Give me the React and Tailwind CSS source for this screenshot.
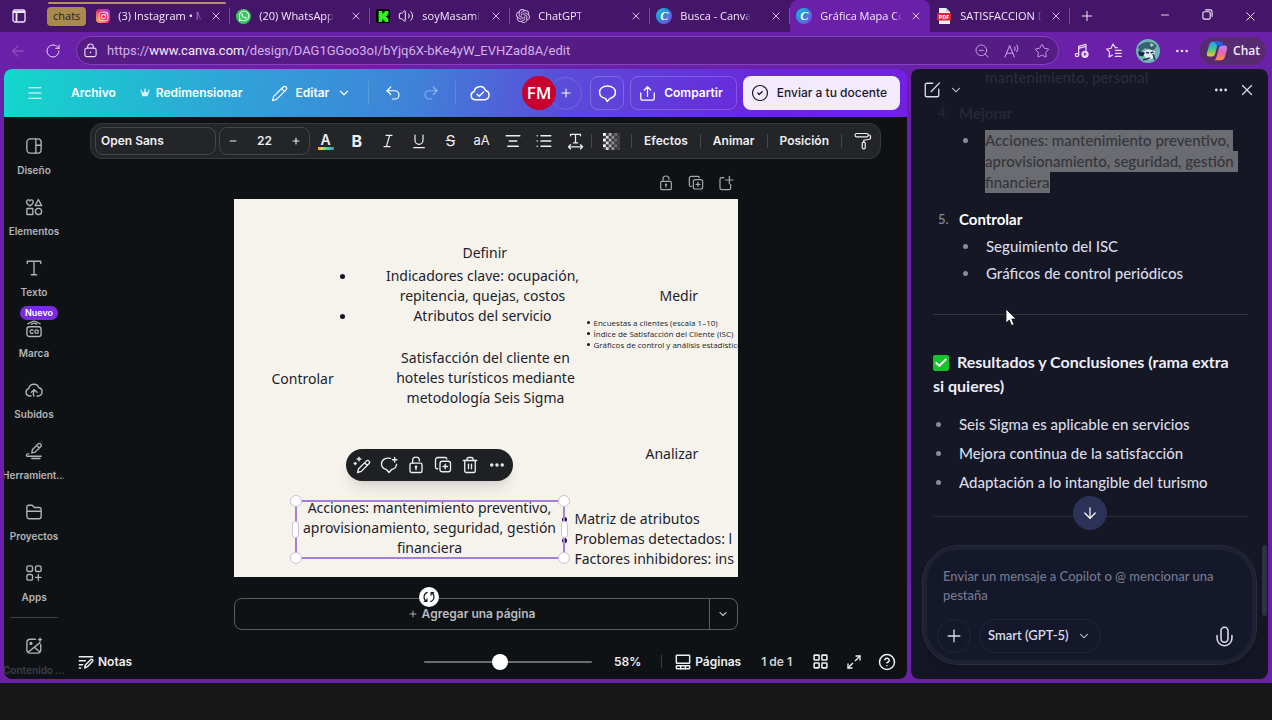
import { useState } from 'react';
import {
  AlignCenter, ArrowDown, ArrowLeft, Check, ChevronDown, CircleCheck, CircleHelp, CloudUpload,
  Ellipsis, Folder, LayoutGrid, List, Maximize2, Menu, MessageCircle, Minus, Pencil,
  Plus, Redo2, RotateCw, Star, Trash2, Undo2, Volume2, X, ZoomOut,
} from 'lucide-react';
import { FaInstagram, FaWhatsapp } from 'react-icons/fa';
import { SiKick, SiOpenai } from 'react-icons/si';

const stroke = {
  viewBox: '0 0 24 24',
  fill: 'none',
  stroke: 'currentColor',
  strokeWidth: 1.8,
  strokeLinecap: 'round',
  strokeLinejoin: 'round',
};

const UnlockIcon = ({ className }) => (
  <svg {...stroke} className={className}>
    <rect x="4" y="9.500" width="16" height="12.500" rx="2" />
    <path d="M7.500 9.500V6a4.500 4.500 0 0 1 9 0v.5M12 14v4" />
    <circle cx="12" cy="14.500" r=".8" />
  </svg>
);

const CopyPlusIcon = ({ className }) => (
  <svg {...stroke} className={className}>
    <rect x="8" y="7" width="14" height="14" rx="3" />
    <path d="M5 17H4a2 2 0 0 1-2-2V5a3 3 0 0 1 3-3h10a2 2 0 0 1 2 2M15 11v6M12 14h6" />
  </svg>
);

const AddPageIcon = ({ className }) => (
  <svg {...stroke} className={className}>
    <path d="M9 4H5.500A2.500 2.500 0 0 0 3 6.500v13A2.500 2.500 0 0 0 5.500 22h11a2.500 2.500 0 0 0 2.500-2.500V14M17 2v11M11.500 7.500h11" />
  </svg>
);

const DesignIcon = ({ className }) => (
  <svg {...stroke} className={className}>
    <rect x="2.500" y="2.500" width="19" height="19" rx="4.500" />
    <path d="M14.500 2.500v19M14.500 11h7" />
  </svg>
);

const ElementsIcon = ({ className }) => (
  <svg {...stroke} className={className}>
    <path d="M6.500 10.500C3.500 8.500 2 7 2 5.200 2 2.400 5.200 1.500 6.500 4c1.300-2.500 4.500-1.600 4.500 1.200 0 1.800-1.500 3.300-4.500 5.300zM17.800 2l4.400 8h-8.800z" />
    <rect x="2.500" y="14" width="8" height="8" rx=".5" />
    <circle cx="18" cy="18" r="4.200" />
  </svg>
);

const TextIcon = ({ className }) => (
  <svg {...stroke} className={className}>
    <path d="M3 6V3h18v3M12 3v18M8.500 21h7" />
  </svg>
);

const BrandIcon = ({ className }) => (
  <svg {...stroke} className={className}>
    <path d="M4 5c3-1 4.500-3.500 8-3.500S17 4 20 5M8.500 5.500c2-1.500 5-1.500 7 0" />
    <rect x="2.500" y="9" width="19" height="13" rx="3.500" />
    <path d="M10.800 13.600a2.400 2.400 0 1 0 0 3.800" />
    <circle cx="15.500" cy="15.500" r="2.300" />
  </svg>
);

const ToolsIcon = ({ className }) => (
  <svg {...stroke} className={className}>
    <path d="M9 14.500l1-4.500 7.500-7.500a2 2 0 0 1 3 0l.5.500a2 2 0 0 1 0 3L13.500 13.500zM15.500 4.500l3.500 3.500M5 15.500c-4 .5-4 3.500-1 3.500h17.500M9 22h11" />
  </svg>
);

const FolderIcon = ({ className }) => (
  <svg {...stroke} className={className}>
    <path d="M2.500 18V5.500A2.500 2.500 0 0 1 5 3h4.500l3 3H19a2.500 2.500 0 0 1 2.500 2.500V18a3 3 0 0 1-3 3h-13a3 3 0 0 1-3-3zM2.500 11h19" />
  </svg>
);

const UploadIcon = ({ className }) => (
  <svg {...stroke} className={className}>
    <path d="M8 20H6a5 5 0 0 1-1-9.800A7 7 0 0 1 18.500 9 5.600 5.600 0 0 1 18 20h-2M12 20c-1.500-2-1-4.500.5-7M8.500 15l4-3.500 3.500 3.500" />
  </svg>
);

const AppsIcon = ({ className }) => (
  <svg {...stroke} className={className}>
    <rect x="2.500" y="2.500" width="7.500" height="7.500" rx="2" />
    <rect x="14" y="2.500" width="7.500" height="7.500" rx="2" />
    <rect x="2.500" y="14" width="7.500" height="7.500" rx="2" />
    <path d="M17.800 14v7.500M14 17.800h7.500" />
  </svg>
);

const MagicMediaIcon = ({ className }) => (
  <svg {...stroke} className={className}>
    <path d="M14 3H7a4.500 4.500 0 0 0-4.500 4.500v9.500A4.500 4.500 0 0 0 7 21.500h9.500A4.500 4.500 0 0 0 21 17v-7M4.500 20L20 7.500M13 14l7 6" />
    <circle cx="8" cy="8.500" r="1.200" fill="currentColor" />
    <path d="M20 1.500v4M18 3.500h4" />
  </svg>
);

const NotesIcon = ({ className }) => (
  <svg {...stroke} strokeWidth={2.2} className={className}>
    <path d="M2 4h20M2 10h9M2 16h5M2 21h2M10 21l1-4.500L19 8.500a1.800 1.800 0 0 1 2.700 0 1.800 1.800 0 0 1 0 2.700L14 19z" />
  </svg>
);

const PagesIcon = ({ className }) => (
  <svg {...stroke} strokeWidth={2.2} className={className}>
    <rect x="2" y="2" width="20" height="12" rx="1" />
    <rect x="2" y="17.500" width="20" height="4.500" rx="1" />
    <path d="M8.500 17.500V22M15.500 17.500V22" />
  </svg>
);

const RollerIcon = ({ className }) => (
  <svg {...stroke} strokeWidth={1.6} className={className}>
    <rect x="1.500" y="2" width="17.500" height="4.500" rx="2" />
    <path d="M19 4h1.500a1.500 1.500 0 0 1 1.500 1.500V8c0 1-.5 1.500-1.500 1.700L13 11v3" />
    <rect x="11" y="13.500" width="4" height="9" rx="1.600" />
  </svg>
);

const SpacingIcon = ({ className }) => (
  <svg {...stroke} className={className}>
    <path d="M5 4V2h14v2M12 2v12M9 14h6M2 19.500h20M5 16.500l-3 3 3 3M19 16.500l3 3-3 3" />
  </svg>
);

const CheckerIcon = ({ className }) => (
  <svg viewBox="0 0 18 18" fill="#fff" className={className}>
    {[0, 1, 2, 3, 4, 5].map((row) =>
      [0, 1, 2, 3, 4, 5].map((col) => (
        <rect
          key={`${row}-${col}`}
          x={col * 3}
          y={row * 3}
          width="3"
          height="3"
          opacity={(row + col) % 2 === 0 ? 1 - col * 0.17 : 0.1}
        />
      ))
    )}
  </svg>
);

const MagicPencilIcon = ({ className }) => (
  <svg {...stroke} className={className}>
    <path d="M6 22l1.500-5L18 6.500a2 2 0 0 1 3 0l.5.500a2 2 0 0 1 0 3L11 20.500zM15.500 9l3.500 3.500" />
    <path d="M8 1.500v5M5.500 4h5M3 8.500v3M1.500 10h3" />
  </svg>
);

const CommentPlusIcon = ({ className }) => (
  <svg {...stroke} className={className}>
    <path d="M14 3.200C7.500 1.500 2 5 2 10.500c0 4 3 6.500 6.500 7.500L12 22l3.500-4c4-1 6.500-3.500 6.500-7M19.500 2v6M16.500 5h6" />
  </svg>
);

const CommentIcon = ({ className }) => (
  <svg {...stroke} className={className}>
    <path d="M12 2.500c6 0 10 3.500 10 8 0 4-2.500 6.500-6.500 7.500L11.500 22 9.500 18.200C5 17.500 2 14.800 2 10.500c0-4.500 4-8 10-8z" />
  </svg>
);

const CrownIcon = ({ className }) => (
  <svg viewBox="0 0 24 24" fill="currentColor" className={className}>
    <path d="M12 3l3.500 8L22 7l-3.500 13h-13L2 7l6.500 4z" />
    <circle cx="2.500" cy="6" r="2" />
    <circle cx="12" cy="3" r="2" />
    <circle cx="21.500" cy="6" r="2" />
  </svg>
);

const CloudCheckIcon = ({ className }) => (
  <svg {...stroke} className={className}>
    <path d="M6 20a5 5 0 0 1-1-9.800A7 7 0 0 1 18.500 9 5.600 5.600 0 0 1 18 20zM8.500 13.500l2.500 2.500 5-5" />
  </svg>
);

const ShareIcon = ({ className }) => (
  <svg {...stroke} className={className}>
    <path d="M2.500 11v8a2.500 2.500 0 0 0 2.500 2.500h14a2.500 2.500 0 0 0 2.500-2.500v-8M12 16V2.500M7.500 7L12 2.500 16.500 7" />
  </svg>
);

const ComposeIcon = ({ className }) => (
  <svg {...stroke} className={className}>
    <path d="M13 3H5a2 2 0 0 0-2 2v14a2 2 0 0 0 2 2h14a2 2 0 0 0 2-2v-8M11 14L22 2.500" />
  </svg>
);

const MicIcon = ({ className }) => (
  <svg {...stroke} className={className}>
    <rect x="8" y="1.500" width="8" height="17" rx="4" />
    <path d="M3.500 11v3a8.500 8.500 0 0 0 17 0v-3" />
  </svg>
);

const CopilotLogo = ({ className }) => (
  <svg viewBox="0 0 24 24" className={className}>
    <defs>
      <linearGradient id="cpA" x1="0" y1="0" x2="0" y2="1">
        <stop offset="0" stopColor="#2a9df4" />
        <stop offset=".5" stopColor="#3fc98b" />
        <stop offset="1" stopColor="#f6c81f" />
      </linearGradient>
      <linearGradient id="cpB" x1="0" y1="0" x2="0" y2="1">
        <stop offset="0" stopColor="#a78bfa" />
        <stop offset=".5" stopColor="#f062b0" />
        <stop offset="1" stopColor="#fb923c" />
      </linearGradient>
    </defs>
    <path d="M8 2h8c-2 0-3 1.500-3.500 3.500L10 15c-.6 2-1.800 3-4 3H3.500C1 18 .5 16 1.200 13.500L3.500 5.500C4.200 3.200 5.700 2 8 2z" fill="url(#cpA)" />
    <path d="M16 22H8c2 0 3-1.500 3.500-3.500L14 9c.6-2 1.800-3 4-3h2.500c2.500 0 3 2 2.300 4.500l-2.300 8c-.7 2.300-2.200 3.500-4.500 3.500z" fill="url(#cpB)" />
    <path d="M9 2h6.500c2 0 2.700 1 3.300 4H12z" fill="#2563eb" />
  </svg>
);

const CanvaLogo = () => (
  <span className="flex size-4 items-center justify-center rounded-full bg-gradient-to-br from-[#16c5d0] via-[#2b86e0] to-[#7b2be0] font-['Liberation_Serif',serif] text-xs font-bold text-white italic">
    C
  </span>
);

const PdfLogo = () => (
  <svg viewBox="0 0 16 16" className="size-4">
    <path d="M3 0h7l4 4v12H3z" fill="#f4f4f5" />
    <path d="M10 0l4 4h-4z" fill="#c9c9d2" />
    <rect x="1" y="5" width="14" height="7.500" rx="1" fill="#e0262d" />
    <text x="8" y="10.800" textAnchor="middle" fontSize="5.500" fontWeight="700" fill="#fff" fontFamily="Open Sans">PDF</text>
  </svg>
);

const tabs = [
  {
    title: '(3) Instagram • M',
    icon: (
      <span className="flex size-[14px] items-center justify-center rounded bg-gradient-to-tr from-[#fdb42c] via-[#e8286b] to-[#8a34d6]">
        <FaInstagram className="size-[11px] text-white" />
      </span>
    ),
  },
  {
    title: '(20) WhatsApp',
    icon: (
      <span className="flex size-[15px] items-center justify-center rounded-full bg-[#35c85a]">
        <FaWhatsapp className="size-3 text-white" />
      </span>
    ),
  },
  {
    title: 'soyMasami',
    audio: true,
    icon: (
      <span className="flex size-[14px] items-center justify-center rounded-xs bg-black">
        <SiKick className="size-[11px] text-[#2bf51b]" />
      </span>
    ),
  },
  { title: 'ChatGPT', icon: <SiOpenai className="size-[14px] text-[#d9c8ea]" /> },
  { title: 'Busca - Canva', icon: <CanvaLogo /> },
  { title: 'Gráfica Mapa Co', icon: <CanvaLogo />, active: true },
  { title: 'SATISFACCION D', icon: <PdfLogo /> },
];

const railItems = [
  { label: 'Diseño', Icon: DesignIcon },
  { label: 'Elementos', Icon: ElementsIcon },
  { label: 'Texto', Icon: TextIcon },
  { label: 'Marca', Icon: BrandIcon, badge: 'Nuevo' },
  { label: 'Subidos', Icon: UploadIcon },
  { label: 'Herramient…', Icon: ToolsIcon },
  { label: 'Proyectos', Icon: FolderIcon },
  { label: 'Apps', Icon: AppsIcon },
];

function BrowserTab({ tab }) {
  return (
    <div
      className={`flex h-full w-[140px] min-w-0 items-center ${
        tab.active ? 'rounded-t-lg bg-[#6b20a9]' : ''
      }`}
    >
      <button className="flex min-w-0 flex-1 items-center gap-2 pl-[6px] text-left text-[11px] text-[#f3e8fb]">
        <span className="shrink-0">{tab.icon}</span>
        {tab.audio && <Volume2 className="size-4 shrink-0" strokeWidth={1.5} />}
        <span className="overflow-hidden whitespace-nowrap mask-r-from-90%">{tab.title}</span>
      </button>
      <button aria-label="Cerrar pestaña" className="flex w-[27px] shrink-0 items-center justify-center text-[#e9d8f7]">
        <X className="size-3" strokeWidth={1.8} />
      </button>
      <span className={`h-4 w-px ${tab.active ? '' : 'bg-[#7d4ba6]'}`} />
    </div>
  );
}

function TabStrip() {
  return (
    <div className="relative flex h-8 shrink-0 items-center bg-[#451569]">
      <span className="absolute top-[2px] left-12 h-[2px] w-[178px] rounded-full bg-[#b58f6c]" />
      <button aria-label="Acciones de pestañas" className="flex w-[37px] justify-center text-[#f3e8fb]">
        <svg viewBox="0 0 14 14" className="size-[14px]" fill="none" stroke="currentColor" strokeWidth="1.300">
          <rect x="1" y="1" width="12" height="12" rx="2" />
          <path d="M1 3h12M4.500 4v9" strokeWidth="1.800" />
        </svg>
      </button>
      <button className="mr-1 ml-[10px] h-[19px] rounded bg-[#a98a4f] px-[6px] text-[11px] text-[#2c1d14]">chats</button>
      <div className="flex h-full min-w-0 flex-1 items-center">
        {tabs.map((tab) => (
          <BrowserTab key={tab.title} tab={tab} />
        ))}
        <button aria-label="Nueva pestaña" className="px-[9px] text-[#f3e8fb]">
          <Plus className="size-4" strokeWidth={1.5} />
        </button>
      </div>
      <div className="flex text-[#f3e8fb]">
        <button aria-label="Minimizar" className="flex w-[43px] justify-center"><Minus className="size-3" strokeWidth={1.8} /></button>
        <button aria-label="Restaurar" className="flex w-[43px] justify-center">
          <svg viewBox="0 0 12 12" className="size-[11px]" fill="none" stroke="currentColor" strokeWidth="1.200">
            <rect x="1" y="3" width="8" height="8" rx="1.500" />
            <path d="M3.500 1H9a2 2 0 0 1 2 2v5.500" />
          </svg>
        </button>
        <button aria-label="Cerrar" className="flex w-[43px] justify-center"><X className="size-[15px]" strokeWidth={1.5} /></button>
      </div>
    </div>
  );
}

function AddressBar() {
  return (
    <div className="flex h-[37px] shrink-0 items-center bg-[#6b20a9] pr-[6px] text-[#ead9f8]">
      <button aria-label="Atrás" className="flex w-9 justify-center text-[#9a5fcb]"><ArrowLeft className="size-[18px]" strokeWidth={1.4} /></button>
      <button aria-label="Actualizar" className="mr-[6px] flex w-[34px] justify-center"><RotateCw className="size-4" strokeWidth={1.5} /></button>
      <div className="flex h-[29px] min-w-0 flex-1 items-center rounded-full border border-[#8443b8] bg-[#561c86] pr-2 pl-[6px]">
        <svg {...stroke} viewBox="0 0 16 16" strokeWidth="1.200" className="size-[15px] shrink-0">
          <rect x="2" y="5.500" width="12" height="9" rx="2" />
          <path d="M5 5.500V4a3 3 0 0 1 6 0v1.500M8 9.500v1" />
        </svg>
        <p className="ml-[9px] min-w-0 flex-1 truncate font-[Roboto,sans-serif] text-[13px] text-[#d2b3ea]">
          https://<span className="text-[#f6ecfc]">www.canva.com</span>/design/DAG1GGoo3oI/bYjq6X-bKe4yW_EVHZad8A/edit
        </p>
        <div className="flex items-center gap-[14px] text-[#c49be6]">
          <button aria-label="Alejar"><ZoomOut className="size-4" strokeWidth={1.5} /></button>
          <button aria-label="Leer en voz alta">
            <svg {...stroke} strokeWidth={1.6} className="size-4">
              <path d="M1.500 21L8.500 4l7 17M4 15.500h9M16 6a5 5 0 0 1 0 5M19 3a9 9 0 0 1 0 10" />
            </svg>
          </button>
          <button aria-label="Favoritos"><Star className="size-4" strokeWidth={1.5} /></button>
        </div>
      </div>
      <button aria-label="Multimedia" className="ml-[15px]">
        <svg {...stroke} strokeWidth={2} className="size-4">
          <path d="M7 18V5l11-3v9M7 8l11-3" />
          <circle cx="4.500" cy="18" r="2.500" />
          <circle cx="16.500" cy="17" r="4.500" fill="currentColor" />
          <path d="M15.500 15.200v3.600l2.600-1.800z" stroke="#6b20a9" strokeWidth="1" fill="#6b20a9" />
        </svg>
      </button>
      <button aria-label="Lista de favoritos" className="ml-4">
        <svg {...stroke} strokeWidth={1.8} className="size-4">
          <path d="M17 7h-3L10.500 1.500 7.500 8 1 9l4.500 4.800L4.500 21l5-2.800M14 11h9M14 15.500h9M14 20h9" />
        </svg>
      </button>
      <button aria-label="Perfil" className="ml-[14px] overflow-hidden rounded-full">
        <svg viewBox="0 0 24 24" className="size-6">
          <rect width="24" height="24" fill="#6fb3b4" />
          <path d="M2 8c5-6 14-7 19-1l-4 5-8-3-5 4z" fill="#35626e" />
          <path d="M5 14l7-4 7 2-2 7-4 2-4-3z" fill="#e5ecf0" />
          <path d="M2 12l7 1.500-2 4-4-1z" fill="#1b2747" />
          <path d="M10 13.500l3 .5M14.500 14l3-1M7 21l7-2M17 15l2 6" stroke="#27345a" strokeWidth="1.500" />
          <path d="M14 4l4 2-3 2z" fill="#b6e3dc" />
        </svg>
      </button>
      <button aria-label="Más opciones" className="ml-[14px]"><Ellipsis className="size-4" strokeWidth={2} /></button>
      <button className="ml-[10px] flex h-7 items-center gap-[5px] rounded-full bg-[#582a72] px-[6px] text-xs font-semibold text-[#f6ecfc]">
        <CopilotLogo className="size-[22px]" />
        Chat
      </button>
    </div>
  );
}

function EditorHeader() {
  return (
    <header className="flex h-12 shrink-0 items-center bg-[linear-gradient(100deg,#12d8cb_0%,#2fa4d8_25%,#3f83d8_45%,#5a4cd9_62%,#6a25dc_85%,#7420e4_100%)] pr-[7px] pl-[22px] text-xs font-semibold text-white">
      <button aria-label="Menú" className="mr-[27px]"><Menu className="size-[18px]" strokeWidth={1.6} /></button>
      <button>Archivo</button>
      <button className="ml-6 flex items-center gap-[6px]">
        <CrownIcon className="size-[10px] text-[#d8f3ff]" />
        Redimensionar
      </button>
      <button className="ml-7 flex items-center gap-2">
        <Pencil className="size-[17px]" strokeWidth={1.6} />
        Editar
        <ChevronDown className="size-[14px]" strokeWidth={2} />
      </button>
      <span className="ml-[17px] h-6 w-px bg-white/15" />
      <button aria-label="Deshacer" className="ml-[15px]"><Undo2 className="size-[18px]" strokeWidth={1.6} /></button>
      <button aria-label="Rehacer" className="ml-5 text-white/40"><Redo2 className="size-[18px]" strokeWidth={1.6} /></button>
      <span className="ml-[15px] h-6 w-px bg-white/15" />
      <button aria-label="Cambios guardados" className="ml-[14px]"><CloudCheckIcon className="size-5" /></button>
      <div className="ml-auto flex items-center">
        <span className="z-10 flex size-[34px] items-center justify-center rounded-full bg-[#c8002f] font-['Open_Sans',sans-serif] text-[17px] font-semibold">FM</span>
        <button aria-label="Agregar miembro" className="-ml-[7px] flex size-[33px] items-center justify-center rounded-full border border-white/15">
          <Plus className="size-[14px]" strokeWidth={1.8} />
        </button>
        <button aria-label="Comentarios" className="ml-2 flex size-[34px] items-center justify-center rounded-lg border border-white/20">
          <CommentIcon className="size-[19px]" />
        </button>
        <button className="ml-[6px] flex h-[34px] items-center gap-2 rounded-lg border border-white/20 px-2 pr-[13px]">
          <ShareIcon className="size-[17px]" />
          Compartir
        </button>
        <button className="ml-[6px] flex h-[34px] items-center gap-2 rounded-lg bg-[#f3ebfd] px-2 pr-[13px] font-medium text-[#1c1528]">
          <CircleCheck className="size-[18px]" strokeWidth={1.6} />
          Enviar a tu docente
        </button>
      </div>
    </header>
  );
}

function Rail() {
  return (
    <nav className="w-[60px] shrink-0 overflow-hidden pt-5 text-[10px] font-semibold text-[#b3b4b8]">
      <div className="flex flex-col gap-5">
        {railItems.map(({ label, Icon, badge }) => (
          <button key={label} className="relative flex h-[41px] flex-col items-center gap-[7px] whitespace-nowrap">
            {badge && (
              <span className="absolute -top-[14px] left-4 rounded-full bg-[#7a2ae0] px-[5px] text-[9px] leading-[14px] text-white">
                {badge}
              </span>
            )}
            <Icon className="size-[18px]" />
            <span className="leading-4">{label}</span>
          </button>
        ))}
      </div>
      <hr className="mx-[6px] mt-3 border-[#3b3d42]" />
      <button className="mt-[19px] flex w-full flex-col items-center gap-[7px] whitespace-nowrap">
        <MagicMediaIcon className="size-[18px]" />
        <span className="leading-4 text-[#3d3f44]">Contenido …</span>
      </button>
    </nav>
  );
}

const Sep = () => <span className="h-[14px] w-px shrink-0 bg-[#47484c]" />;

function TextToolbar() {
  return (
    <div className="flex h-9 w-full max-w-[791px] items-center rounded-xl border border-[#38393d] bg-[#242528] px-1 text-xs font-semibold text-[#eeeff1]">
      <button className="h-7 w-[121px] rounded-lg border border-[#45464b] px-[5px] text-left">Open Sans</button>
      <div className="ml-[3px] flex h-7 w-[91px] items-center justify-between rounded-lg border border-[#45464b] px-2">
        <button aria-label="Reducir tamaño"><Minus className="size-[10px]" strokeWidth={2.6} /></button>
        <label className="sr-only" htmlFor="fontSize">Tamaño de fuente</label>
        <input id="fontSize" defaultValue="22" className="w-8 bg-transparent text-center outline-none" />
        <button aria-label="Aumentar tamaño"><Plus className="size-[10px]" strokeWidth={2.6} /></button>
      </div>
      <div className="flex flex-1 items-center justify-around">
        <button aria-label="Color de texto" className="flex w-[18px] flex-col items-center">
          <span className="text-sm leading-[14px]">A</span>
          <span className="h-[3px] w-4 bg-[linear-gradient(90deg,#f59e2b,#d8e23a,#46e06a,#35b9f0,#7a5cf0)]" />
        </button>
        <button aria-label="Negrita" className="w-[18px] text-base font-bold">B</button>
        <button aria-label="Cursiva" className="flex w-[18px] justify-center">
          <svg {...stroke} className="size-4"><path d="M9 3.500h9M6 20.500h9M14.500 3.500l-5 17" /></svg>
        </button>
        <button aria-label="Subrayado" className="flex w-[18px] justify-center">
          <svg {...stroke} className="size-4"><path d="M6 3v8a6 6 0 0 0 12 0V3M4 22h16" /></svg>
        </button>
        <button aria-label="Tachado" className="w-[18px] text-[15px] font-normal line-through">S</button>
        <button aria-label="Mayúsculas" className="w-[18px] text-[13px] font-normal">aA</button>
        <button aria-label="Alineación" className="flex w-[18px] justify-center"><AlignCenter className="size-[18px]" strokeWidth={2} /></button>
        <button aria-label="Lista" className="flex w-[18px] justify-center"><List className="size-[18px]" strokeWidth={2} /></button>
        <button aria-label="Espaciado" className="flex w-[18px] justify-center"><SpacingIcon className="size-[17px]" /></button>
      </div>
      <Sep />
      <button aria-label="Transparencia" className="px-[11px]"><CheckerIcon className="size-[17px]" /></button>
      <Sep />
      <button className="px-3">Efectos</button>
      <Sep />
      <button className="px-3">Animar</button>
      <Sep />
      <button className="px-3">Posición</button>
      <Sep />
      <button aria-label="Copiar estilo" className="pr-1 pl-3"><RollerIcon className="size-[18px]" /></button>
    </div>
  );
}

const Handle = ({ className }) => (
  <span className={`absolute rounded-full border border-[#c9c2d6] bg-white ${className}`} />
);

function Slide() {
  return (
    <div className="relative aspect-[4/3] w-full font-['Noto_Sans',sans-serif] text-sm leading-5 text-[#211d2b]">
      <div className="absolute inset-0 overflow-hidden bg-[#f6f3ed] whitespace-nowrap">
        <p className="absolute top-[44px] left-[229px]">Definir</p>
        <ul className="absolute top-[67px] left-[149px] w-[200px] text-center">
          <li>Indicadores clave: ocupación,<br />repitencia, quejas, costos</li>
          <li>Atributos del servicio</li>
        </ul>
        <span className="absolute top-[75px] left-[106px] size-[5px] rounded-full bg-[#16131d]" />
        <span className="absolute top-[115px] left-[106px] size-[5px] rounded-full bg-[#16131d]" />
        <p className="absolute top-[149px] left-[150px] w-[204px] text-center">
          Satisfacción del cliente en<br />hoteles turísticos mediante<br />metodología Seis Sigma
        </p>
        <p className="absolute top-[170px] left-[38px]">Controlar</p>
        <p className="absolute top-[87px] left-[426px]">Medir</p>
        <p className="absolute top-[245px] left-[412px]">Analizar</p>
        <ul className="absolute top-[118px] left-[353px] font-['Open_Sans',sans-serif] text-[8px] leading-[11px]">
          {['Encuestas a clientes (escala 1–10)', 'Índice de Satisfacción del Cliente (ISC)', 'Gráficos de control y análisis estadístico'].map((t) => (
            <li key={t} className="flex items-center gap-[4px]">
              <span className="size-[3px] rounded-full bg-[#16131d]" />
              {t}
            </li>
          ))}
        </ul>
        <ul className="absolute top-[310px] left-[341px]">
          <li>Matriz de atributos</li>
          <li>Problemas detectados: l</li>
          <li>Factores inhibidores: ins</li>
        </ul>
        <span className="absolute top-[318px] left-[328px] size-[5px] rounded-full bg-[#1c0f3f]" />
        <span className="absolute top-[339px] left-[328px] size-[5px] rounded-full bg-[#1c0f3f]" />
      </div>

      <div className="absolute top-[301px] left-[61px] h-[59px] w-[270px] border-2 border-[#a57fd8] text-center whitespace-nowrap">
        <p className="-mt-1">
          Acciones: mantenimiento preventivo,<br />aprovisionamiento, seguridad, gestión<br />financiera
        </p>
        <Handle className="-top-[7px] -left-[7px] size-3" />
        <Handle className="-top-[7px] -right-[7px] size-3" />
        <Handle className="-bottom-[7px] -left-[7px] size-3" />
        <Handle className="-right-[7px] -bottom-[7px] size-3" />
        <Handle className="top-[19px] -left-[5px] h-[17px] w-[7px]" />
        <Handle className="top-[19px] -right-[5px] h-[17px] w-[7px]" />
      </div>

      <div className="absolute top-[250px] left-[112px] flex h-8 w-[167px] items-center justify-between rounded-full bg-[#1f2023] px-[7px] text-[#ecedef] shadow-lg">
        <button aria-label="Edición mágica"><MagicPencilIcon className="size-[18px]" /></button>
        <button aria-label="Comentar"><CommentPlusIcon className="size-[18px]" /></button>
        <button aria-label="Bloquear"><UnlockIcon className="size-[18px]" /></button>
        <button aria-label="Duplicar"><CopyPlusIcon className="size-[18px]" /></button>
        <button aria-label="Eliminar"><Trash2 className="size-[18px]" strokeWidth={1.8} /></button>
        <button aria-label="Más"><Ellipsis className="size-[18px]" strokeWidth={2.6} /></button>
      </div>

      <button aria-label="Girar" className="absolute top-[388px] left-[185px] z-10 flex size-5 items-center justify-center rounded-full bg-white text-[#1b1b1f]">
        <svg {...stroke} strokeWidth={2} className="size-[14px]">
          <path d="M9 4a8.500 8.500 0 0 0-1 15.500M4 19.500h4.500V15M15 20a8.500 8.500 0 0 0 1-15.500M20 4.500h-4.500V9" />
        </svg>
      </button>
    </div>
  );
}

function BottomBar({ zoom, setZoom }) {
  return (
    <footer className="mt-auto flex h-[35px] w-full items-center pr-[11px] pl-[14px] text-xs font-semibold text-[#eeeff1]">
      <button className="flex items-center gap-1">
        <NotesIcon className="size-4" />
        Notas
      </button>
      <div className="ml-auto flex items-center">
        <input
          type="range"
          aria-label="Zoom"
          min="10"
          max="117"
          value={zoom}
          onChange={(e) => setZoom(Number(e.target.value))}
          className="h-[2px] w-[168px] appearance-none rounded-full bg-[#6a6c70] [&::-webkit-slider-thumb]:size-4 [&::-webkit-slider-thumb]:appearance-none [&::-webkit-slider-thumb]:rounded-full [&::-webkit-slider-thumb]:bg-white"
        />
        <span className="ml-[22px]">{zoom}%</span>
        <span className="mr-[13px] ml-5 h-[13px] w-px bg-[#3b3d42]" />
        <button className="flex items-center gap-1">
          <PagesIcon className="size-4" />
          Páginas
        </button>
        <span className="ml-5 text-[#cfd0d4]">1 de 1</span>
        <button aria-label="Vista de cuadrícula" className="ml-5"><LayoutGrid className="size-[17px]" strokeWidth={2.2} /></button>
        <button aria-label="Pantalla completa" className="ml-[17px]"><Maximize2 className="size-4" strokeWidth={2} /></button>
        <button aria-label="Ayuda" className="ml-4"><CircleHelp className="size-[18px]" strokeWidth={2} /></button>
      </div>
    </footer>
  );
}

function Editor() {
  const [zoom, setZoom] = useState(58);
  return (
    <main className="flex min-w-0 flex-1 flex-col overflow-hidden rounded-lg bg-[#0e1215] font-[Inter,sans-serif]">
      <EditorHeader />
      <div className="flex min-h-0 flex-1">
        <Rail />
        <section className="flex min-w-0 flex-1 flex-col items-center pt-[6px]">
          <TextToolbar />
          <div className="mt-4 flex w-full max-w-[504px] flex-col">
            <div className="mb-2 flex justify-end gap-[14px] pr-1 text-[#a5a7ab]">
              <button aria-label="Desbloquear página"><UnlockIcon className="size-4" /></button>
              <button aria-label="Duplicar página"><CopyPlusIcon className="size-4" /></button>
              <button aria-label="Agregar página"><AddPageIcon className="size-4" /></button>
            </div>
            <Slide />
            <div className="mt-[21px] flex h-8 rounded-lg border border-[#5a5d61] text-xs font-semibold text-[#b9bbbe]">
              <button className="flex flex-1 items-center justify-center gap-1">
                <Plus className="size-[10px]" strokeWidth={2.2} />
                Agregar una página
              </button>
              <button aria-label="Más tipos de página" className="flex w-7 items-center justify-center border-l border-[#5a5d61]">
                <ChevronDown className="size-3" strokeWidth={2.2} />
              </button>
            </div>
          </div>
          <BottomBar zoom={zoom} setZoom={setZoom} />
        </section>
      </div>
    </main>
  );
}

const Bullet = ({ children }) => (
  <li className="flex items-start">
    <span className="mt-[10px] mr-[18px] size-[5px] shrink-0 rounded-full bg-[#878a9b]" />
    <span className="min-w-0 flex-1">{children}</span>
  </li>
);

function CopilotPanel() {
  const [model, setModel] = useState('Smart (GPT-5)');
  return (
    <aside className="relative flex w-[357px] shrink-0 flex-col overflow-hidden rounded-lg bg-[#151725] font-[Lato,sans-serif] text-[15px] font-medium text-[#d9dbe8]">
      <div className="absolute inset-x-0 top-0 z-10 flex h-[42px] items-center pr-3 pl-3 text-[#d9dbe8]">
        <button aria-label="Nuevo chat"><ComposeIcon className="size-[18px]" /></button>
        <button aria-label="Historial" className="ml-2"><ChevronDown className="size-[14px]" strokeWidth={1.8} /></button>
        <button aria-label="Más opciones" className="ml-auto"><Ellipsis className="size-4" strokeWidth={2.2} /></button>
        <button aria-label="Cerrar panel" className="ml-[9px]"><X className="size-[18px]" strokeWidth={1.6} /></button>
      </div>

      <div className="min-h-0 flex-1 overflow-hidden pr-5 pl-[22px] leading-6">
        <p className="pl-[52px] leading-4 text-[#2a2c39]">mantenimiento, personal</p>
        <p className="mt-4 flex text-[#252734]">
          <span className="w-[26px] pl-[5px] text-[13px]">4.</span>
          <b>Mejorar</b>
        </p>
        <ul className="mt-[5px] pl-[30px]">
          <li className="flex leading-[21px] text-[#35363b]">
            <span className="mt-2 mr-[17px] size-[5px] shrink-0 rounded-full bg-[#878a9b]" />
            <span className="min-w-0 flex-1 whitespace-nowrap">
              <span className="block w-fit bg-[#6b6c71] pr-1">Acciones: mantenimiento preventivo,</span>
              <span className="block w-fit bg-[#6b6c71] pr-1">aprovisionamiento, seguridad, gestión</span>
              <span className="block w-fit bg-[#6b6c71]">financiera</span>
            </span>
          </li>
        </ul>
        <p className="mt-[14px] flex text-white">
          <span className="w-[26px] pl-[5px] text-[13px] text-[#878a9b]">5.</span>
          <b>Controlar</b>
        </p>
        <ul className="mt-[3px] flex flex-col gap-[3px] pl-[30px]">
          <Bullet>Seguimiento del ISC</Bullet>
          <Bullet>Gráficos de control periódicos</Bullet>
        </ul>
        <hr className="mt-[29px] border-[#34364a]" />
        <h2 className="mt-[35px] pr-4 text-base leading-6 font-bold text-[#eceef8]">
          <span className="mr-2 inline-flex size-4 items-center justify-center rounded-xs bg-[#17c22e] align-[-2px]">
            <Check className="size-[14px] text-white" strokeWidth={3.4} />
          </span>
          Resultados y Conclusiones (rama extra si quieres)
        </h2>
        <ul className="mt-[14px] flex flex-col gap-[5px] pl-[3px]">
          <Bullet>Seis Sigma es aplicable en servicios</Bullet>
          <Bullet>Mejora continua de la satisfacción</Bullet>
          <Bullet>Adaptación a lo intangible del turismo</Bullet>
        </ul>
        <hr className="mt-[22px] border-[#2a2c3d]" />
      </div>

      <button aria-label="Ir al final" className="absolute bottom-[149px] left-1/2 flex size-[34px] -translate-x-1/2 items-center justify-center rounded-full bg-[#2c3157] text-white">
        <ArrowDown className="size-[18px]" strokeWidth={1.6} />
      </button>

      <form className="mx-3 mb-[15px] h-[118px] rounded-[36px] border-4 border-[#1e2131] bg-[#15182a] px-[10px] pt-[17px] shadow-xl outline outline-[#2b2e40]">
        <textarea
          aria-label="Mensaje"
          rows={2}
          placeholder="Enviar un mensaje a Copilot o @ mencionar una pestaña"
          className="block w-full resize-none bg-transparent px-[6px] text-[13px] leading-[19px] outline-none placeholder:text-[#74778d]"
        />
        <div className="mt-[14px] flex items-center">
          <button type="button" aria-label="Adjuntar" className="flex size-[34px] items-center justify-center rounded-full border border-[#22253a]">
            <Plus className="size-5" strokeWidth={1.6} />
          </button>
          <div className="relative ml-2">
            <select
              aria-label="Modelo"
              value={model}
              onChange={(e) => setModel(e.target.value)}
              className="h-[34px] w-[122px] appearance-none rounded-full border border-[#22253a] bg-transparent pl-2 text-[13px] font-semibold outline-none"
            >
              <option>Smart (GPT-5)</option>
            </select>
            <ChevronDown className="pointer-events-none absolute top-[10px] right-[10px] size-[14px]" strokeWidth={1.8} />
          </div>
          <button type="button" aria-label="Dictar" className="mr-[7px] ml-auto"><MicIcon className="size-[21px]" /></button>
        </div>
      </form>
      <span className="absolute right-[1px] bottom-[63px] h-[71px] w-[5px] rounded-full bg-[#2f3242]" />

      <svg viewBox="0 0 12 19" className="absolute top-[239px] left-[94px] h-[19px] w-3">
        <path d="M1 1v14l3.300-3 2.300 5.500 2.400-1L6.700 11H11z" fill="#fff" stroke="#111" strokeWidth=".8" />
      </svg>
    </aside>
  );
}

export default function App() {
  return (
    <div className="flex h-screen flex-col overflow-hidden bg-[#171717] font-['Open_Sans',sans-serif]">
      <TabStrip />
      <AddressBar />
      <div className="flex min-h-0 flex-1 gap-1 bg-[#6b20a9] px-1 pb-1">
        <Editor />
        <CopilotPanel />
      </div>
      <div className="h-[37px] shrink-0 bg-[#171717]" />
    </div>
  );
}
